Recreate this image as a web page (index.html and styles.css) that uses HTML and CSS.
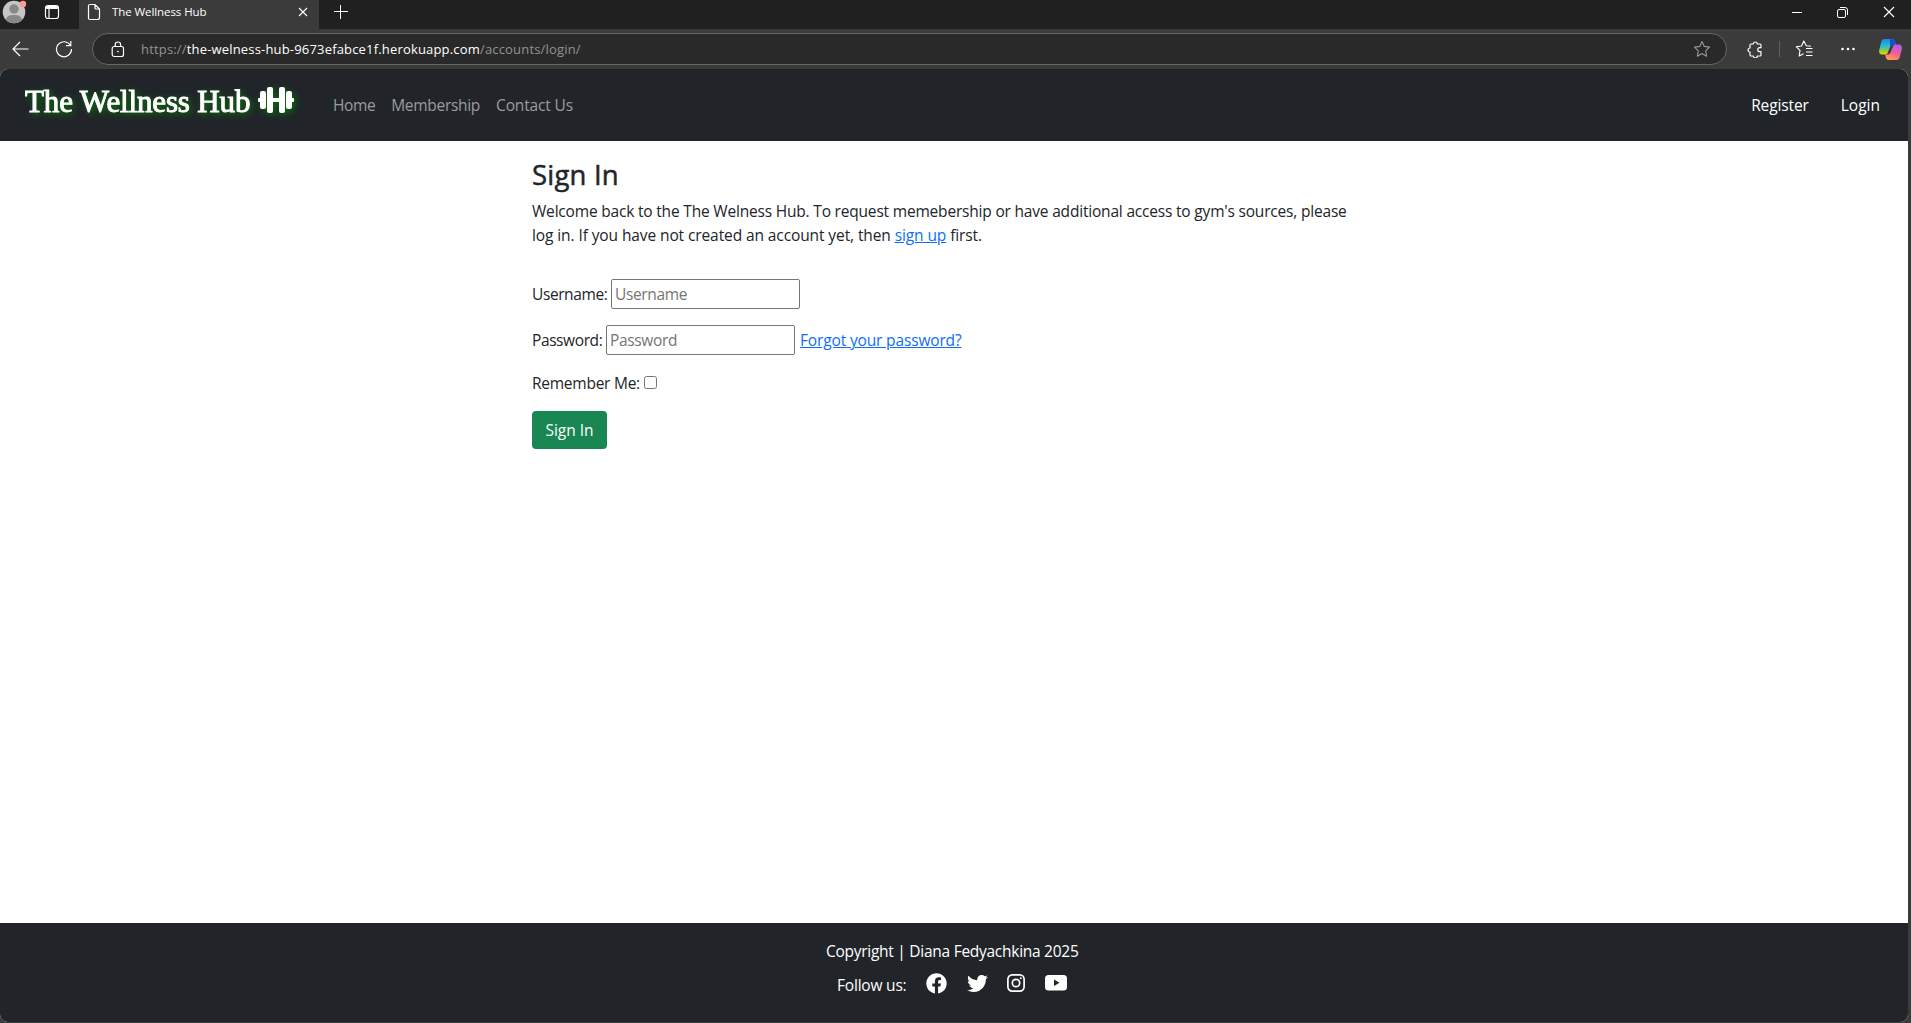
FILE: index.html
```html
<!DOCTYPE html>
<html lang="en">
<head>
<meta charset="utf-8">
<title>The Wellness Hub</title>
<link rel="stylesheet" href="styles.css">
</head>
<body>
<div class="tabbar">
  <svg class="avatar" width="26" height="25" viewBox="0 0 26 25"><circle cx="12" cy="12" r="11.3" fill="#c8c6c4"/><circle cx="12" cy="9" r="4.7" fill="#8a8886"/><path d="M4 20c0-4 4-5 8-5s8 1 8 5c-4 4.200-12 4.200-16 0z" fill="#8a8886"/><circle cx="21" cy="4" r="3.200" fill="#ff9a93"/></svg>
  <svg class="workspaces" width="16" height="16" viewBox="0 0 16 16"><rect x="1.500" y="1.500" width="13" height="13" rx="2.500" fill="none" stroke="#fff" stroke-width="1.200"/><path d="M1.500 5V4a2.500 2.500 0 0 1 2.500-2.500h8A2.500 2.500 0 0 1 14.500 4v1z" fill="#fff"/><path d="M5 5v9.500" stroke="#fff" stroke-width="1.200"/></svg>
  <div class="tab">
    <svg width="14" height="18" viewBox="0 0 14 18" fill="none" stroke="#fff" stroke-width="1.200"><path d="M3 1.500h5l4.500 4.500v8.500a2 2 0 0 1-2 2H3a1.500 1.500 0 0 1-1.500-1.500V3A1.500 1.500 0 0 1 3 1.500zM8 1.500V5a1 1 0 0 0 1 1h3.500"/></svg>
    <span class="tab-title">The Wellness Hub</span>
    <svg width="10" height="10" viewBox="0 0 10 10"><path d="M1 1l8 8M9 1l-8 8" stroke="#fff" stroke-width="1.100"/></svg>
  </div>
  <svg class="newtab" width="14" height="14" viewBox="0 0 14 14"><path d="M0 6.500h14M6.500 0v14" stroke="#fff" stroke-width="1"/></svg>
  <div class="window-controls">
    <svg width="10" height="12" viewBox="0 0 10 12"><path d="M0 6.500h10" stroke="#fff"/></svg>
    <svg width="11" height="11" viewBox="0 0 11 11" fill="none" stroke="#fff"><rect x=".5" y="2.500" width="8" height="8" rx="1.500"/><path d="M3 .5h5a2.500 2.500 0 0 1 2.500 2.500v5"/></svg>
    <svg width="12" height="12" viewBox="0 0 12 12"><path d="M1 1l10 10M11 1L1 11" stroke="#fff" stroke-width="1.100"/></svg>
  </div>
</div>
<div class="toolbar">
  <svg class="back" width="17" height="16" viewBox="0 0 17 16" fill="none" stroke="#fff" stroke-width="1.200"><path d="M16.500 8H1M8 1L1 8l7 7"/></svg>
  <svg class="reload" width="18" height="18" viewBox="0 0 18 18" fill="none" stroke="#fff" stroke-width="1.200"><path d="M15.500 5.500A7.500 7.500 0 1 0 16.500 9M15.800 1v4.700H11"/></svg>
  <div class="address">
    <svg class="lock" width="14" height="17" viewBox="0 0 14 17" fill="none" stroke="#fff" stroke-width="1.200"><rect x="1.200" y="5.500" width="11.300" height="10" rx="2"/><path d="M4.200 5.500V3.700a2.700 2.700 0 0 1 5.400 0v1.800"/><circle cx="6.900" cy="10.500" r=".6" fill="#fff" stroke-width=".6"/></svg>
    <span class="url">https://<b>the-welness-hub-9673efabce1f.herokuapp.com</b>/accounts/login/</span>
    <svg class="star" width="18" height="18" viewBox="0 0 18 18" fill="none" stroke="#999" stroke-width="1.100" stroke-linejoin="round"><path d="M9 1.500l2.300 4.900 5.200.7-3.800 3.700.9 5.400L9 13.600l-4.600 2.600.9-5.400L1.500 7.100l5.200-.7z"/></svg>
  </div>
  <svg class="puzzle" width="16" height="17" viewBox="0 0 16 17" fill="none" stroke="#fff" stroke-width="1.200" stroke-linejoin="round"><path d="M4 3h2.300a2 2 0 0 1 4 0H13a1 1 0 0 1 1 1v2.700h-1.200a2 2 0 0 0 0 4H14V14a1 1 0 0 1-1 1h-2.700a2 2 0 0 1-4 0H4a1 1 0 0 1-1-1v-3a2 2 0 0 1 0-4V4a1 1 0 0 1 1-1z"/></svg>
  <span class="divider"></span>
  <svg class="favorites" width="18" height="18" viewBox="0 0 18 18" fill="none" stroke="#fff" stroke-width="1.100" stroke-linejoin="round"><path d="M16 6.300l-4.700-.6L8.800 1 6.500 6l-5.200.8L5 10.400 4.200 16l4.300-2.200M11 8.500h6.500M11 12h6.500M11 15.500h6.500"/></svg>
  <svg class="more" width="14" height="4" viewBox="0 0 14 4" fill="#fff"><circle cx="1.500" cy="2" r="1.300"/><circle cx="7" cy="2" r="1.300"/><circle cx="12.500" cy="2" r="1.300"/></svg>
  <svg class="copilot" width="23" height="21" viewBox="0 0 23 21">
    <defs><linearGradient id="ca" x1="0" y1="0" x2="0" y2="1"><stop offset="0" stop-color="#1789ef"/><stop offset=".45" stop-color="#28bdd0"/><stop offset=".75" stop-color="#8bcd45"/><stop offset="1" stop-color="#ffd000"/></linearGradient><linearGradient id="cb" x1=".7" y1="0" x2=".3" y2="1"><stop offset="0" stop-color="#aa62e8"/><stop offset=".5" stop-color="#f05b9d"/><stop offset="1" stop-color="#ffa14a"/></linearGradient></defs>
    <path d="M5.500 0H13c2 0 2.500 1 3 2.500L17 6h-3c-2 0-2.700 1-3.200 2.500L9 13c-.6 1.800-1.500 2.500-3 2.500H3C.5 15.500-.3 13.500.2 11l2-8C2.800 1 3.700 0 5.500 0z" fill="url(#ca)"/>
    <path d="M11 .2h2c2 0 2.500 1 3 2.500L17 6h-3c-1.500 0-2.300.6-3 2z" fill="#194bd0"/>
    <path d="M17.500 21H10c-2 0-2.700-1-3.100-2.500L6 15.500h2.500c2 0 2.700-1 3.200-2.500L14 7.500C14.500 6 15.500 5.500 17 5.500h3c2.500 0 3.300 2 2.800 4.500l-2 8c-.6 2-1.500 3-3.300 3z" fill="url(#cb)"/>
  </svg>
</div>
<div class="page">
  <header class="navbar">
    <a class="brand"><span class="brand-text">The Wellness Hub</span>
      <svg width="36" height="26" viewBox="0 0 36 26" fill="#fff"><rect x="0" y="11" width="5" height="4" rx="1"/><rect x="2" y="4" width="6" height="18" rx="2"/><rect x="9" y="0" width="6" height="26" rx="2"/><rect x="14" y="11" width="8" height="4"/><rect x="21" y="0" width="6" height="26" rx="2"/><rect x="28" y="4" width="6" height="18" rx="2"/><rect x="31" y="11" width="5" height="4" rx="1"/></svg>
    </a>
    <nav class="links"><a class="l-home">Home</a><a class="l-member">Membership</a><a class="l-contact">Contact Us</a></nav>
    <nav class="account"><a class="l-register">Register</a><a class="l-login">Login</a></nav>
  </header>
  <main>
    <h2>Sign In</h2>
    <p class="intro"><span class="line1">Welcome back to the The Welness Hub. To request memebership or have additional access to gym's sources, please</span><br><span class="line2">log in. If you have not created an account yet, then <a href="#">sign up</a> first.</span></p>
    <form>
      <div class="field username"><label>Username:</label><input type="text" placeholder="Username"></div>
      <div class="field password"><label>Password:</label><input type="password" placeholder="Password"><a href="#">Forgot your password?</a></div>
      <div class="field remember"><label>Remember Me:</label><input type="checkbox"></div>
      <button type="button">Sign In</button>
    </form>
  </main>
  <footer>
    <div class="copyright">Copyright | Diana Fedyachkina 2025</div>
    <div class="social"><span>Follow us:</span>
      <svg class="fb" width="21" height="21" viewBox="0 0 512 512" fill="#fff"><path d="M504 256C504 119 393 8 256 8S8 119 8 256c0 123.780 90.690 226.380 209.250 245V327.690h-63V256h63v-54.640c0-62.150 37-96.480 93.670-96.480 27.140 0 55.520 4.840 55.520 4.840v61h-31.280c-30.800 0-40.410 19.120-40.410 38.730V256h68.780l-11 71.690h-57.780V501C413.310 482.380 504 379.780 504 256z"/></svg>
      <svg class="tw" width="21" height="21" viewBox="0 0 512 512" fill="#fff"><path d="M459.370 151.716c.325 4.548.325 9.097.325 13.645 0 138.720-105.583 298.558-298.558 298.558-59.452 0-114.680-17.219-161.137-47.106 8.447.974 16.568 1.299 25.340 1.299 49.055 0 94.213-16.568 130.274-44.832-46.132-.975-84.792-31.188-98.112-72.772 6.498.974 12.995 1.624 19.818 1.624 9.421 0 18.843-1.300 27.614-3.573-48.081-9.747-84.143-51.980-84.143-102.985v-1.299c13.969 7.797 30.214 12.670 47.431 13.319-28.264-18.843-46.781-51.005-46.781-87.391 0-19.492 5.197-37.360 14.294-52.954 51.655 63.675 129.300 105.258 216.365 109.807-1.624-7.797-2.599-15.918-2.599-24.040 0-57.828 46.782-104.934 104.934-104.934 30.213 0 57.502 12.670 76.670 33.137 23.715-4.548 46.456-13.320 66.599-25.340-7.798 24.366-24.366 44.833-46.132 57.827 21.117-2.273 41.584-8.122 60.426-16.243-14.292 20.791-32.161 39.308-52.628 54.253z"/></svg>
      <svg class="ig" width="18" height="18" viewBox="0 0 18 18" fill="none" stroke="#fff"><rect x=".9" y=".9" width="16.200" height="16.200" rx="4.300" stroke-width="1.700"/><circle cx="9" cy="9" r="3.700" stroke-width="1.700"/><circle cx="13.800" cy="4.200" r=".6" fill="#fff"/></svg>
      <svg class="yt" width="22" height="16" viewBox="0 0 22 16"><rect width="22" height="15.500" rx="3.500" fill="#fff"/><path d="M9 4.500v6.600l5.500-3.300z" fill="#212529"/></svg>
    </div>
  </footer>
</div>
</body>
</html>
```
FILE: styles.css
```css
* { box-sizing: border-box; }
body { margin: 0; height: 1023px; overflow: hidden; background: #3b3b3b; display: flex; flex-direction: column; font: 15.5px/24px "Open Sans", "Noto Sans", sans-serif; color: #212529; }
svg { display: block; flex: none; }
a { color: #0d6efd; }
.tabbar { height: 29px; background: #3b3b3b; display: flex; align-items: flex-start; flex: none; background: linear-gradient(90deg, #202020 60px, #3b3b3b 60px, #3b3b3b 340px, #202020 340px); }
.avatar { margin-left: 2px; }
.workspaces { margin: 4px 19px 0 16px; }
.tab { width: 240px; height: 29px; background: #3b3b3b; display: flex; align-items: center; padding: 0 11px 5px 8px; color: #fff; }
.tab-title { font-size: 11.5px; line-height: 20px; margin-left: 11px; flex: 1; letter-spacing: -.08px; }
.newtab { margin: 5px 0 0 15px; }
.window-controls { margin: 6px 16px 0 auto; display: flex; gap: 35px; align-items: center; }
.tabbar { background: #202020; }
.toolbar { height: 40px; background: #3b3b3b; display: flex; align-items: center; flex: none; }
.back { margin-left: 12px; }
.reload { margin-left: 26px; }
.address { width: 1635px; height: 32px; margin-left: 19px; border: 1px solid #666; border-radius: 16px; background: #292929; display: flex; align-items: center; padding: 0 15px 0 18px; }
.url { margin-left: 16px; flex: 1; color: #929292; font-size: 13px; letter-spacing: .175px; white-space: nowrap; }
.url b { color: #fff; font-weight: 400; }
.puzzle { margin-left: 20px; }
.divider { width: 1px; height: 16px; background: #606060; margin-left: 16px; }
.favorites { margin-left: 15px; }
.more { margin-left: 28px; }
.copilot { margin-left: 24px; }
.page { width: 1908px; height: 953px; background: #fff; border-radius: 8px; overflow: hidden; display: flex; flex-direction: column; }
.navbar { height: 72px; background: #212529; display: flex; padding-left: 25px; flex: none; }
.brand { display: flex; width: 308px; color: #fff; filter: drop-shadow(2px 2px 3px #087008); }
.brand-text { width: 233px; padding-top: 11px; font: 31px/44px "Liberation Serif", serif; letter-spacing: -.15px; -webkit-text-stroke: 1px #fff; white-space: nowrap; }
.brand svg { margin-top: 18px; }
.links, .account { display: flex; padding-top: 24px; gap: 16px; white-space: nowrap; }
.links a { color: #9a9c9e; }
.l-home { letter-spacing: -.4px; }
.l-member { letter-spacing: -.3px; }
.l-contact { letter-spacing: -.15px; }
.l-register { letter-spacing: -.12px; }
.account { margin-left: auto; gap: 32px; padding-right: 28px; }
.account a { color: #fff; }
main { flex: 1; padding: 14px 0 0 532px; }
h2 { margin: 3px 0 8px; font-size: 27.5px; line-height: 33px; font-weight: 500; letter-spacing: .2px; -webkit-text-stroke: .5px #212529; }
.intro { margin: 0 0 32px; white-space: nowrap; }
.line1 { letter-spacing: -.19px; }
.line2 { letter-spacing: -.1px; }
.field { display: flex; align-items: center; height: 30px; margin-bottom: 16px; white-space: nowrap; }
.field input[type="text"], .field input[type="password"] { width: 189px; height: 30px; border: 1px solid #767676; border-radius: 2px; padding: 1px 3px; font: inherit; letter-spacing: -.35px; margin: 0 5px 0 0; }
.field input::placeholder { color: #757575; }
.field label { letter-spacing: -.4px; }
.field a { letter-spacing: -.15px; }
.username label { width: 79px; }
.password label { width: 74px; }
.remember { height: 24px; margin-bottom: 16px; }
.remember label { width: 112px; letter-spacing: -.25px; }
.remember input { margin: 0 0 1px; width: 13px; height: 13px; }
button { width: 75px; height: 38px; border: 0; border-radius: 4px; background: #198754; color: #fff; font: inherit; padding: 0; }
footer { height: 99px; background: #212529; color: #fff; flex: none; padding-top: 16px; }
.copyright { padding-left: 826px; letter-spacing: -.27px; }
.social { display: flex; align-items: center; padding-left: 837px; height: 24px; margin-top: 8px; }
.social span { width: 89px; padding-top: 4px; letter-spacing: -.2px; }
.tw { margin-left: 20px; }
.ig { margin-left: 19px; }
.yt { margin-left: 20px; }
```
